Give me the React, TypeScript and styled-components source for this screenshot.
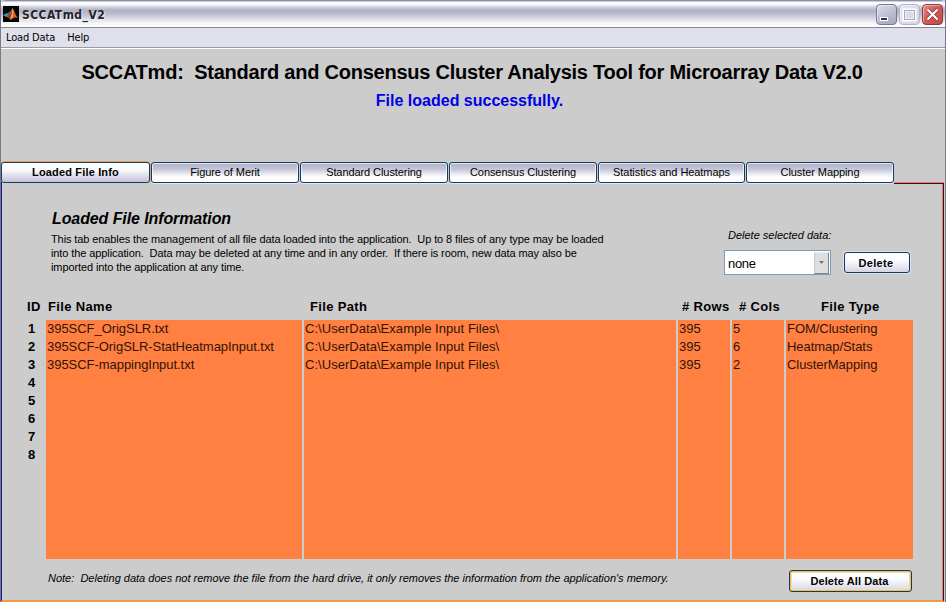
import React from 'react';
import styled, { createGlobalStyle } from 'styled-components';

const GlobalStyle = createGlobalStyle`
  *, *::before, *::after { box-sizing: border-box; }
  body { margin: 0; overflow: hidden; background: #ccc; }
  button { font: inherit; margin: 0; padding: 0; color: #000; }
`;

const Window = styled.div`
  width: 946px;
  height: 602px;
  display: flex;
  flex-direction: column;
  overflow: hidden;
  background: #cccccc;
  border-left: 1px solid #77778d;
  border-right: 1px solid #77778d;
  font-family: 'Liberation Sans', Arial, sans-serif;
  color: #000;
  white-space: pre;
`;

const TitleBar = styled.header`
  height: 28px;
  flex: none;
  display: flex;
  align-items: center;
  margin: 0 -1px;
  padding: 1px 3px 0 3px;
  border-radius: 6px 6px 0 0;
  border-bottom: 1px solid #85859a;
  background: linear-gradient(#6f6f88 0, #a9a9bf 1px, #f7f7fb 2px, #ffffff 4px, #d2d2df 7px, #b2b2c7 10px, #b8b8cb 13px, #d5d5e1 18px, #f5f5f9 23px, #ffffff 26px);
`;

const WindowTitle = styled.h1`
  flex: 1;
  margin: 2px 0 0 3px;
  font: bold 12px/16px 'DejaVu Sans Condensed', 'DejaVu Sans', sans-serif;
  font-stretch: condensed;
  letter-spacing: 0.45px;
  color: #24242c;
  text-shadow: 1px 1px 0 rgba(255, 255, 255, 0.65);
`;

const Controls = styled.div`
  display: flex;
  gap: 2px;
`;

const ControlButton = styled.button<{ $kind: 'min' | 'max' | 'close' }>`
  width: 21px;
  height: 21px;
  display: grid;
  place-items: center;
  border-radius: 4px;
  border: 1px solid ${p => (p.$kind === 'close' ? '#8d3a45' : p.$kind === 'max' ? '#b4b4c8' : '#777994')};
  background: ${p =>
    p.$kind === 'close'
      ? 'linear-gradient(135deg, #e68a83, #d45a56 45%, #c24a48)'
      : p.$kind === 'max'
        ? 'linear-gradient(135deg, #e6e6ef, #d2d2df)'
        : 'linear-gradient(150deg, #dedeea, #b8b9cf 60%, #a3a5c0)'};
  box-shadow: inset 1px 1px 0 rgba(255, 255, 255, 0.4);
`;

const MenuBar = styled.nav`
  height: 21px;
  flex: none;
  display: flex;
  gap: 12px;
  padding-left: 5px;
  background: #dfe0ea;
  border-bottom: 1px solid #fff;
  box-shadow: inset 0 -1px 0 #9a9aa8;
  font: 11px/19px 'DejaVu Sans Condensed', 'DejaVu Sans', sans-serif;
  font-stretch: condensed;
  letter-spacing: -0.15px;
`;

const MenuItem = styled.span``;

const Banner = styled.section`
  height: 113px;
  flex: none;
  text-align: center;
  padding-top: 11px;
`;

const AppTitle = styled.h2`
  margin: 0;
  padding-right: 2px;
  font-size: 20px;
  line-height: 24px;
  letter-spacing: -0.235px;
`;

const Status = styled.p`
  margin: 7px 0 0;
  padding-right: 7px;
  font-size: 16px;
  line-height: 20px;
  font-weight: bold;
  color: #0000e6;
`;

const Tabs = styled.div`
  flex: none;
  height: 21px;
  display: grid;
  grid-template-columns: 149px 148px 148px 148px 147px 148px;
  column-gap: 1px;
  position: relative;
`;

const Tab = styled.button<{ $active?: boolean }>`
  height: 21px;
  font-size: 11px;
  line-height: 17px;
  letter-spacing: ${p => (p.$active ? '0.16px' : '-0.08px')};
  font-weight: ${p => (p.$active ? 'bold' : 'normal')};
  border: 1px solid #123c68;
  border-radius: 3px;
  background: ${p =>
    p.$active
      ? 'linear-gradient(#ffffff 0, #fafafd 35%, #dcdce9 70%, #c2c2d5 100%)'
      : 'linear-gradient(#afafc4 0, #c8c8d8 35%, #f0f0f7 62%, #ffffff 75%)'};
  box-shadow: ${p => (p.$active ? '0 -1px 0 #e5a35e, 1px 0 0 #e5a35e' : 'inset 0 0 0 1px #ffffffb0, 0 1px 0 #dfe7ed')};
`;

const Panel = styled.main`
  flex: 1;
  min-height: 0;
  display: flex;
  flex-direction: column;
  margin-right: 1px;
  margin-top: -1px;
  border-left: 1px solid #17178c;
  border-right: 1px solid #500a10;
  border-bottom: 2px solid #f09a4d;
  box-shadow: inset -1px 0 0 #cf8080;
`;

const PanelEdge = styled.div`
  height: 2px;
  flex: none;
  width: 50px;
  align-self: flex-end;
  margin-right: -1px;
  background: linear-gradient(#d08080 50%, #500a10 50%);
`;

const InfoRow = styled.section`
  height: 112px;
  flex: none;
  display: flex;
`;

const Intro = styled.div`
  width: 672px;
  padding: 25px 0 0 49px;
`;

const Heading = styled.h3`
  margin: 0 0 3px 1px;
  font-size: 16px;
  line-height: 20px;
  font-style: italic;
  letter-spacing: -0.1px;
`;

const Copy = styled.p`
  margin: 0;
  font-size: 11px;
  line-height: 14px;
  letter-spacing: -0.1px;
`;

const DeleteArea = styled.div`
  padding: 44px 0 0 50px;
`;

const DeleteLabel = styled.label`
  display: block;
  margin-left: 4px;
  font-size: 11px;
  line-height: 14px;
  font-style: italic;
`;

const DeleteControls = styled.div`
  display: flex;
  align-items: center;
  gap: 13px;
  margin-top: 8px;
`;

const Combo = styled.div`
  width: 107px;
  height: 25px;
  display: flex;
  align-items: center;
  justify-content: space-between;
  padding: 1px;
  border: 1px solid #7d9cb8;
  background: #fff;
  font-size: 13px;
  letter-spacing: -0.35px;
`;

const ComboValue = styled.span`
  padding: 1px 0 0 2px;
`;

const ComboArrow = styled.span`
  width: 15px;
  height: 22px;
  display: grid;
  place-items: center;
  background: #dedede;
  border: 1px solid;
  border-color: #eee #85858a #85858a #c9c9c9;
`;

const PushButton = styled.button<{ $focused?: boolean }>`
  width: ${p => (p.$focused ? 123 : 66)}px;
  height: ${p => (p.$focused ? 22 : 21)}px;
  padding-right: 2px;
  border: 1px solid #123c68;
  border-radius: 3px;
  background: linear-gradient(#ffffff 0, #fbfbfe 40%, #d4d5e6 100%);
  font-size: 11px;
  font-weight: bold;
  letter-spacing: ${p => (p.$focused ? '0.1px' : '0.33px')};
  box-shadow: ${p => (p.$focused ? 'inset 0 0 0 1px #f2bd57, inset 0 0 0 2px #f9dc9a' : '0 0 0 1px #dce3ea')};
`;

const TABLE_COLUMNS = '24px 256px 372px 52px 52px 127px';

const TableHead = styled.div`
  height: 24px;
  flex: none;
  display: grid;
  grid-template-columns: ${TABLE_COLUMNS};
  column-gap: 2px;
  padding-left: 18px;
  font-size: 13px;
  line-height: 22px;
  font-weight: bold;
  letter-spacing: 0.35px;
`;

const HeadCell = styled.span<{ $inset: number }>`
  padding-left: ${p => p.$inset}px;
`;

const TableBody = styled.div`
  height: 239px;
  flex: none;
  display: grid;
  grid-template-columns: ${TABLE_COLUMNS};
  column-gap: 2px;
  padding-left: 18px;
  font-size: 13px;
  line-height: 18px;
`;

const IdColumn = styled.div`
  display: flex;
  flex-direction: column;
  padding-left: 8px;
  font-weight: bold;
`;

const DataColumn = styled.div<{ $tracking?: number }>`
  display: flex;
  flex-direction: column;
  padding-left: 1px;
  background: #ff8040;
  color: #321307;
  letter-spacing: ${p => p.$tracking ?? 0}px;
`;

const Cell = styled.span`
  height: 18px;
`;

const Footer = styled.footer`
  flex: 1;
  display: flex;
  align-items: flex-start;
  justify-content: space-between;
  padding: 11px 31px 0 46px;
`;

const Note = styled.em`
  font-size: 11px;
  line-height: 16px;
`;

const TABS = ['Loaded File Info', 'Figure of Merit', 'Standard Clustering', 'Consensus Clustering', 'Statistics and Heatmaps', 'Cluster Mapping'];

const HEADINGS: [string, number][] = [
  ['ID', 7],
  ['File Name', 2],
  ['File Path', 6],
  ['# Rows', 4],
  ['# Cols', 7],
  ['File Type', 35],
];

const COLUMNS: { values: string[]; tracking?: number }[] = [
  { values: ['395SCF_OrigSLR.txt', '395SCF-OrigSLR-StatHeatmapInput.txt', '395SCF-mappingInput.txt'], tracking: -0.04 },
  { values: Array(3).fill('C:\\UserData\\Example Input Files\\'), tracking: 0.04 },
  { values: ['395', '395', '395'] },
  { values: ['5', '6', '2'] },
  { values: ['FOM/Clustering', 'Heatmap/Stats', 'ClusterMapping'], tracking: -0.05 },
];

function MatlabLogo() {
  return (
    <svg width="16" height="16" viewBox="0 0 16 16">
      <rect width="16" height="16" fill="#050505" />
      <path d="M0 9 4 7 6 9 3 11Z" fill="#3f91b8" />
      <path d="M4 7 7 5.5 9.5 2 8 8 6 10Z" fill="#2d6690" />
      <path d="M3 11 6 9 9.5 2C11.5 4 12 9 15 12 12 10.5 10 12 7.5 14 6.5 12 5 11 3 11Z" fill="#d85a20" />
      <path d="M9.5 2 9 8 6.5 12 5 11 7.5 8Z" fill="#8c2c18" />
      <path d="M9.5 2 10.5 6 10 11 7.5 14 8.5 9Z" fill="#f5a54a" />
    </svg>
  );
}

export default function App() {
  return (
    <>
      <GlobalStyle />
      <Window>
        <TitleBar>
          <MatlabLogo />
          <WindowTitle>SCCATmd_V2</WindowTitle>
          <Controls>
            <ControlButton $kind="min" aria-label="Minimize">
              <svg width="19" height="19">
                <rect x="3" y="12" width="8" height="4" fill="#fff" />
                <rect x="4" y="13" width="6" height="2" fill="#30304b" />
              </svg>
            </ControlButton>
            <ControlButton $kind="max" aria-label="Maximize">
              <svg width="19" height="19">
                <path d="M4 5H15V15H4Z" fill="none" stroke="#fff" strokeWidth="3" />
                <path d="M4 5.5H15M4.5 5V15M14.5 5V15M4 14.5H15" fill="none" stroke="#a9aabd" />
              </svg>
            </ControlButton>
            <ControlButton $kind="close" aria-label="Close">
              <svg width="19" height="19">
                <path d="M4.5 4.5 14.5 14.5M14.5 4.5 4.5 14.5" stroke="#7b2528" strokeWidth="3.6" />
                <path d="M4.5 4.5 14.5 14.5M14.5 4.5 4.5 14.5" stroke="#fff" strokeWidth="2.4" />
              </svg>
            </ControlButton>
          </Controls>
        </TitleBar>
        <MenuBar>
          <MenuItem>Load Data</MenuItem>
          <MenuItem>Help</MenuItem>
        </MenuBar>
        <Banner>
          <AppTitle>SCCATmd:  Standard and Consensus Cluster Analysis Tool for Microarray Data V2.0</AppTitle>
          <Status>File loaded successfully.</Status>
        </Banner>
        <Tabs>
          {TABS.map((label, i) => (
            <Tab key={label} $active={i === 0}>{label}</Tab>
          ))}
        </Tabs>
        <Panel>
          <PanelEdge />
          <InfoRow>
            <Intro>
              <Heading>Loaded File Information</Heading>
              <Copy>
                {'This tab enables the management of all file data loaded into the application.  Up to 8 files of any type may be loaded\ninto the application.  Data may be deleted at any time and in any order.  If there is room, new data may also be\nimported into the application at any time.'}
              </Copy>
            </Intro>
            <DeleteArea>
              <DeleteLabel>Delete selected data:</DeleteLabel>
              <DeleteControls>
                <Combo>
                  <ComboValue>none</ComboValue>
                  <ComboArrow>
                    <svg width="5" height="3"><path d="M0 0H5L2.5 3Z" fill="#77777a" /></svg>
                  </ComboArrow>
                </Combo>
                <PushButton>Delete</PushButton>
              </DeleteControls>
            </DeleteArea>
          </InfoRow>
          <TableHead>
            {HEADINGS.map(([label, inset]) => (
              <HeadCell key={label} $inset={inset}>{label}</HeadCell>
            ))}
          </TableHead>
          <TableBody>
            <IdColumn>
              {[1, 2, 3, 4, 5, 6, 7, 8].map(n => <Cell key={n}>{n}</Cell>)}
            </IdColumn>
            {COLUMNS.map((column, i) => (
              <DataColumn key={i} $tracking={column.tracking}>
                {column.values.map((value, row) => <Cell key={row}>{value}</Cell>)}
              </DataColumn>
            ))}
          </TableBody>
          <Footer>
            <Note>Note:  Deleting data does not remove the file from the hard drive, it only removes the information from the application's memory.</Note>
            <PushButton $focused>Delete All Data</PushButton>
          </Footer>
        </Panel>
      </Window>
    </>
  );
}
